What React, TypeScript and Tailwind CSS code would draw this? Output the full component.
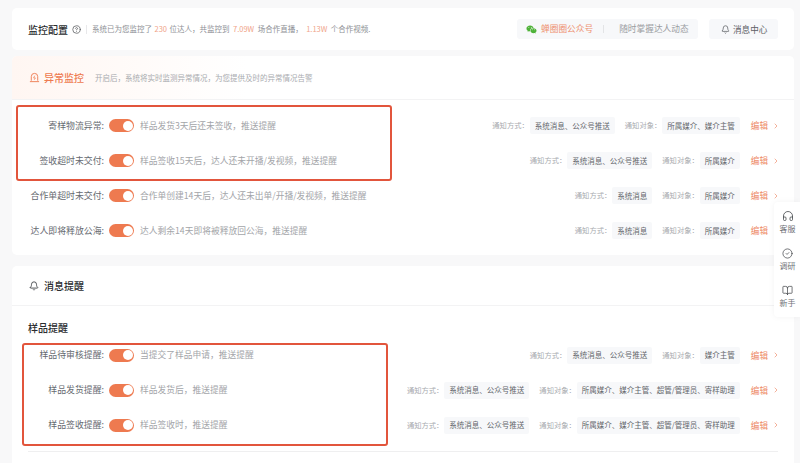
import { Bell, BookOpen, ChevronRight, CircleCheck, CircleHelp, Headphones } from "lucide-react";
import { RiWechatFill } from "react-icons/ri";

type RowData = { label: string; desc: string; way: string; target: string };

const first: RowData[] = [
  { label: "寄样物流异常:", desc: "样品发货3天后还未签收，推送提醒", way: "系统消息、公众号推送", target: "所属媒介、媒介主管" },
  { label: "签收超时未交付:", desc: "样品签收15天后，达人还未开播/发视频，推送提醒", way: "系统消息、公众号推送", target: "所属媒介" },
  { label: "合作单超时未交付:", desc: "合作单创建14天后，达人还未出单/开播/发视频，推送提醒", way: "系统消息", target: "所属媒介" },
  { label: "达人即将释放公海:", desc: "达人剩余14天即将被释放回公海，推送提醒", way: "系统消息", target: "所属媒介" },
];

const second: RowData[] = [
  { label: "样品待审核提醒:", desc: "当提交了样品申请，推送提醒", way: "系统消息、公众号推送", target: "媒介主管" },
  { label: "样品发货提醒:", desc: "样品发货后，推送提醒", way: "系统消息、公众号推送", target: "所属媒介、媒介主管、超管/管理员、寄样助理" },
  { label: "样品签收提醒:", desc: "样品签收时，推送提醒", way: "系统消息、公众号推送", target: "所属媒介、媒介主管、超管/管理员、寄样助理" },
];

function Row({ label, desc, way, target }: RowData) {
  return (
    <div className="flex h-[35px] items-center">
      <div className="w-[92px] shrink-0 whitespace-nowrap text-right text-[8.9px] text-[#666a70]">{label}</div>
      <div className="ml-[5px] flex h-[13px] w-[25px] shrink-0 items-center justify-end rounded-full bg-[#ee7a50] pr-[1.5px]">
        <div className="h-[10px] w-[10px] rounded-full bg-white" />
      </div>
      <div className="ml-[6px] whitespace-nowrap text-[8.75px] text-[#a3a5a9]">{desc}</div>
      <div className="flex flex-1 items-center justify-end whitespace-nowrap text-[7.5px]">
        <span className="text-[7.3px] text-[#a9abaf]">通知方式：</span>
        <span className="ml-[1px] flex h-[17px] items-center rounded-[2px] bg-[#f7f8fa] px-[5px] text-[#63666b]">{way}</span>
        <span className="ml-[10px] text-[7.3px] text-[#a9abaf]">通知对象：</span>
        <span className="ml-[1px] flex h-[17px] items-center rounded-[2px] bg-[#f7f8fa] px-[5px] text-[#63666b]">{target}</span>
        <span className="ml-[11px] text-[8.6px] text-[#ee8a66]">编辑</span>
        <ChevronRight className="ml-[4px] h-[8px] w-[8px] text-[#ee8a66]" strokeWidth={2} />
      </div>
    </div>
  );
}

function Highlight({ className }: { className: string }) {
  return <div className={`pointer-events-none absolute rounded-[3px] border-2 border-[#e2553c] ${className}`} />;
}

function SideItem({ icon, text }: { icon: React.ReactNode; text: string }) {
  return (
    <div className="flex h-[37.500px] flex-col items-center justify-center gap-[2px]">
      {icon}
      <span className="text-[8px] leading-[10px] text-[#707378]">{text}</span>
    </div>
  );
}

const marks = Array.from({ length: 49 });

export default function App() {
  return (
    <div
      className="relative h-[463px] w-[800px] overflow-hidden bg-[#f8f8f9] text-[#2b2d30]"
      style={{ fontFamily: '"Noto Sans CJK SC", "Noto Sans", sans-serif' }}
    >
      <div className="flex flex-col px-[12px] pt-[8px] pr-[6px]">
        <div className="flex h-[42px] items-center rounded-[5px] bg-white pl-[16px] pr-[16px]">
          <span className="text-[10px] font-medium">监控配置</span>
          <CircleHelp className="ml-[4px] h-[9px] w-[9px] text-[#55585c]" strokeWidth={2} />
          <span className="ml-[5px] h-[9px] w-px bg-[#e8e8ea]" />
          <div className="ml-[5px] flex items-center gap-[2.5px] whitespace-nowrap text-[7.5px] text-[#8e9095]">
            <span>系统已为您监控了</span>
            <span className="text-[#f0a489]">230</span>
            <span>位达人，共监控到</span>
            <span className="ml-[1px] text-[#f0a489]">7.09W</span>
            <span className="ml-[1px]">场合作直播，</span>
            <span className="ml-[1px] text-[#f0a489]">1.13W</span>
            <span className="ml-[1px]">个合作视频.</span>
          </div>
          <div className="ml-auto flex h-[20px] w-[181px] items-center rounded-[3px] bg-[#f7f8fa] pl-[9px] text-[8.7px]">
            <RiWechatFill className="h-[11px] w-[11px] text-[#4eb238]" />
            <span className="ml-[4px] text-[#ee9071]">蝉圈圈公众号</span>
            <span className="ml-[10px] h-[8px] w-px bg-[#e3e4e6]" />
            <span className="ml-[15px] whitespace-nowrap text-[#9a9ca1]">随时掌握达人动态</span>
          </div>
          <div className="ml-[11px] flex h-[20px] w-[69px] items-center rounded-[3px] bg-[#f7f8fa] pl-[12px] text-[8.6px] text-[#5d6065]">
            <Bell className="h-[9px] w-[9px]" strokeWidth={2} />
            <span className="ml-[3px]">消息中心</span>
          </div>
        </div>

        <div className="mt-[6px] flex h-[199px] flex-col rounded-[5px] bg-white">
          <div className="flex h-[44px] shrink-0 items-center rounded-t-[5px] border-b border-[#f3f3f4] bg-gradient-to-r from-[#fff6f2] to-white to-[30%] pl-[17px]">
            <svg viewBox="0 0 12 12" className="h-[11px] w-[11px] text-[#ee7a50]" fill="none" stroke="currentColor" strokeWidth="1">
              <path d="M2.500 9.500V5a3.500 3.500 0 0 1 7 0v4.500" />
              <path d="M1 10.500h10" />
              <path d="M6.300 4 5 6.500h2L5.700 8.500" strokeWidth="0.8" />
            </svg>
            <span className="ml-[4px] text-[10px] font-medium text-[#ee7a50]">异常监控</span>
            <span className="ml-[11px] whitespace-nowrap text-[7.5px] text-[#a9abaf]">开启后，系统将实时监测异常情况，为您提供及时的异常情况告警</span>
          </div>
          <div className="pt-[8px] pr-[14px]">
            {first.map((r) => (
              <Row key={r.label} {...r} />
            ))}
          </div>
        </div>

        <div className="mt-[11px] flex flex-col rounded-[5px] bg-white pr-[14px]">
          <div className="flex h-[40px] shrink-0 items-center border-b border-[#f3f3f4] pl-[17px]">
            <Bell className="h-[10px] w-[10px] text-[#33363a]" strokeWidth={2} />
            <span className="ml-[5px] text-[10px] font-medium">消息提醒</span>
          </div>
          <div className="flex h-[31.500px] items-end pb-[3px] pl-[16px] text-[10px] font-medium leading-[14px]">样品提醒</div>
          {second.map((r) => (
            <Row key={r.label} {...r} />
          ))}
          <div className="ml-[16px] mr-[2px] mt-[8px] h-px bg-[#efeff0]" />
          <div className="h-[20px]" />
        </div>
      </div>

      <div className="pointer-events-none absolute inset-0 grid grid-cols-[repeat(7,125px)] auto-rows-[62px] pl-[18px] pt-[52px]">
        {marks.map((_, i) => (
          <div key={i} className="-rotate-[12deg] text-[6px] leading-[8px] text-black/[0.035]">
            <div>蝉圈圈</div>
            <div className="pl-[5px]">zcq_3f277</div>
          </div>
        ))}
      </div>

      <Highlight className="left-[16px] top-[105px] h-[76px] w-[376px]" />
      <Highlight className="left-[22px] top-[343px] h-[103px] w-[366px]" />

      <div className="absolute right-0 top-[202px] flex w-[26px] flex-col rounded-l-[4px] bg-white py-[1px] pl-[1px] shadow-[0_0_6px_rgba(0,0,0,0.05)]">
        <SideItem icon={<Headphones className="h-[12px] w-[12px] text-[#43464a]" strokeWidth={1.6} />} text="客服" />
        <SideItem icon={<CircleCheck className="h-[11px] w-[11px] text-[#43464a]" strokeWidth={1.6} />} text="调研" />
        <SideItem icon={<BookOpen className="h-[11px] w-[11px] text-[#43464a]" strokeWidth={1.6} />} text="新手" />
      </div>
    </div>
  );
}
